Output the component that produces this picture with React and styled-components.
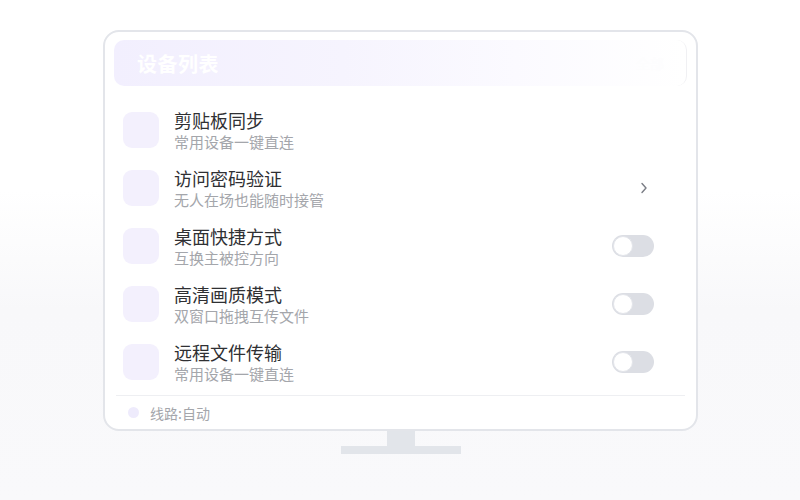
import React from "react"
import styled, { createGlobalStyle } from "styled-components"

const GlobalStyle = createGlobalStyle`
  html, body {
    margin: 0;
    padding: 0;
  }
  body {
    font-family: "Noto Sans CJK SC", "Noto Sans", sans-serif;
    background: linear-gradient(180deg, #ffffff 0%, #ffffff 38%, #f8f8fa 62%, #f9f9fb 100%);
    width: 800px;
    height: 500px;
    overflow: hidden;
  }
`

const rows = [
  { title: "剪贴板同步", desc: "常用设备一键直连", action: "none" },
  { title: "访问密码验证", desc: "无人在场也能随时接管", action: "chevron" },
  { title: "桌面快捷方式", desc: "互换主被控方向", action: "toggle" },
  { title: "高清画质模式", desc: "双窗口拖拽互传文件", action: "toggle" },
  { title: "远程文件传输", desc: "常用设备一键直连", action: "toggle" },
]

const App = () => {
  return (
    <Page>
      <GlobalStyle />
      <Monitor>
        <Screen>
          <Header>
            <HeaderTitle>设备列表</HeaderTitle>
            <HeaderExtra>全部</HeaderExtra>
          </Header>
          <List>
            {rows.map((row) => (
              <Row key={row.title + row.desc}>
                <IconBox />
                <Texts>
                  <Title>{row.title}</Title>
                  <Desc>{row.desc}</Desc>
                </Texts>
                {row.action === "chevron" && (
                  <Chevron viewBox="0 0 8 12" width="8" height="12">
                    <path d="M2 1.5 L6 6 L2 10.5" fill="none" stroke="#7a7d85" strokeWidth="1.4" strokeLinecap="round" strokeLinejoin="round" />
                  </Chevron>
                )}
                {row.action === "toggle" && (
                  <Toggle>
                    <Knob />
                  </Toggle>
                )}
              </Row>
            ))}
          </List>
          <Footer>
            <Dot />
            <FooterText>线路:自动</FooterText>
          </Footer>
        </Screen>
        <Neck />
        <Base />
      </Monitor>
    </Page>
  )
}

export default App

const Page = styled.div`
  width: 800px;
  height: 500px;
  display: flex;
  justify-content: center;
  padding-top: 30px;
  padding-left: 1px;
  box-sizing: border-box;
`

const Monitor = styled.div`
  display: flex;
  flex-direction: column;
  align-items: center;
`

const Screen = styled.div`
  width: 595px;
  height: 401px;
  box-sizing: border-box;
  border: 2px solid #e3e5ea;
  border-radius: 16px;
  background: #ffffff;
  padding: 8px 9px 0 9px;
  display: flex;
  flex-direction: column;
`

const Header = styled.div`
  height: 46px;
  border-radius: 10px;
  background: linear-gradient(90deg, #f2effe 0%, #f6f4fe 40%, #fbfaff 70%, #ffffff 100%);
  border-right: 1px solid #f0f0f3;
  display: flex;
  align-items: center;
  justify-content: space-between;
  padding: 0 22px 0 23px;
`

const HeaderTitle = styled.div`
  color: #ffffff;
  font-size: 20px;
  font-weight: 700;
  letter-spacing: 0.5px;
`

const HeaderExtra = styled.div`
  color: #fdfdfe;
  font-size: 14px;
`

const List = styled.div`
  display: flex;
  flex-direction: column;
  padding-top: 15px;
  margin: 0 2px;
  border-bottom: 1px solid #eeeff2;
  padding-bottom: 4px;
`

const Row = styled.div`
  height: 58px;
  display: flex;
  align-items: center;
  padding: 0 31px 0 7px;
`

const IconBox = styled.div`
  width: 36px;
  height: 36px;
  border-radius: 9px;
  background: #f3f0fd;
  flex-shrink: 0;
`

const Texts = styled.div`
  flex: 1;
  margin-left: 15px;
  display: flex;
  flex-direction: column;
`

const Title = styled.div`
  font-size: 18px;
  color: #2f3033;
  line-height: 24px;
`

const Desc = styled.div`
  font-size: 15px;
  color: #a4a6ab;
  line-height: 20px;
`

const Chevron = styled.svg`
  margin-right: 6px;
`

const Toggle = styled.div`
  width: 42px;
  height: 22px;
  border-radius: 11px;
  background: #dcdee4;
  display: flex;
  align-items: center;
  padding: 0 1px;
  box-sizing: border-box;
`

const Knob = styled.div`
  width: 20px;
  height: 20px;
  border-radius: 50%;
  background: #ffffff;
  box-sizing: border-box;
  border: 1px solid #e3e5ea;
`

const Footer = styled.div`
  flex: 1;
  display: flex;
  align-items: center;
  padding-left: 14px;
`

const Dot = styled.div`
  width: 11px;
  height: 11px;
  border-radius: 50%;
  background: #eeebfc;
`

const FooterText = styled.div`
  margin-left: 11px;
  font-size: 14px;
  color: #a4a6ab;
`

const Neck = styled.div`
  width: 28px;
  height: 15px;
  background: #e2e5ea;
`

const Base = styled.div`
  width: 120px;
  height: 8px;
  background: #e2e5ea;
`
